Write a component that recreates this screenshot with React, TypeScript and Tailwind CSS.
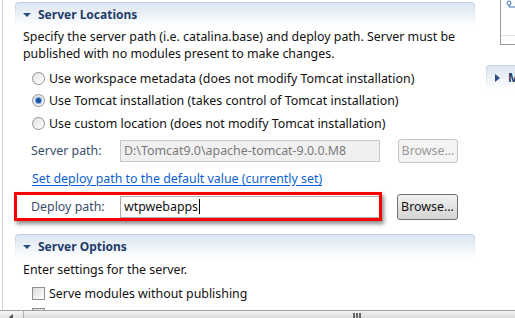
import React from "react";

const font = { fontFamily: '"Noto Sans", "Open Sans", sans-serif' };

function SectionHeader({ title }: { title: string }) {
  return (
    <div className="rounded-t-[4px] bg-gradient-to-b from-[#bfcde0] via-[#e4ebf4] to-white px-[1px] pt-[1px]">
      <div className="flex h-[24px] items-center rounded-t-[3px] bg-gradient-to-b from-[#dce5f1] to-white pl-[7px]">
        <svg width="8" height="8" viewBox="0 0 8 8" className="mr-[7px]">
          <path d="M0 2 L8 2 L4 6 Z" fill="#2b4f82" />
        </svg>
        <span className="whitespace-nowrap text-[12px] font-bold leading-[16px] text-[#1f3d6a]">{title}</span>
      </div>
    </div>
  );
}

function Radio({ checked, label }: { checked?: boolean; label: string }) {
  return (
    <div className="flex h-[22.5px] items-center">
      <span className="relative mr-[4px] flex h-[13px] w-[13px] shrink-0 items-center justify-center rounded-full border border-[#8f8f8f] bg-gradient-to-br from-[#e2e2e2] to-white">
        {checked && <span className="h-[5px] w-[5px] rounded-full bg-[#1d4f9e] shadow-[0_0_1px_1px_#6fa0e0]" />}
      </span>
      <span className="whitespace-nowrap text-[12.4px] leading-[17px] text-[#111]">{label}</span>
    </div>
  );
}

export default function App() {
  return (
    <div className="relative h-[318px] w-[515px] overflow-hidden bg-white" style={font}>
      {/* left edge line */}
      <div className="absolute left-[2px] top-0 h-full w-[1px] bg-[#d4d4d4]" />

      {/* right top panel */}
      <div className="absolute left-[500px] top-0 h-[45px] w-[30px] border-b border-l border-[#9a9a9a] bg-white">
        <svg width="10" height="8" viewBox="0 0 10 8" className="absolute left-[5px] top-[0px]">
          <circle cx="3" cy="3" r="2" fill="none" stroke="#3b6fb0" strokeWidth="1" />
          <path d="M3 5 L3 7 L10 7" stroke="#3b6fb0" strokeWidth="1" fill="none" />
        </svg>
        <div className="absolute left-0 top-[35px] h-[1px] w-full bg-[#e4e4e4]" />
      </div>
      {/* right collapsed section */}
      <div className="absolute left-[486px] top-[65px] w-[40px] rounded-tl-[4px] bg-gradient-to-b from-[#c3d0e1] to-white pl-[1px] pt-[1px]">
        <div className="flex h-[24px] items-center rounded-tl-[3px] bg-gradient-to-b from-[#dce5f1] to-white pl-[8px]">
          <svg width="6" height="8" viewBox="0 0 6 8" className="mr-[7px]">
            <path d="M0 0 L5 4 L0 8 Z" fill="#2b4f82" />
          </svg>
          <span className="text-[12px] font-bold leading-[16px] text-[#1f3d6a]">M</span>
        </div>
      </div>

      <div className="ml-[15px] w-[460px] pt-[2px]">
        <SectionHeader title="Server Locations" />
        <div className="pl-[8px] pt-[1px]">
          <p className="whitespace-nowrap text-[12.4px] leading-[17px] text-[#111]">
            Specify the server path (i.e. catalina.base) and deploy path. Server must be
            <br />
            published with no modules present to make changes.
          </p>
          <div className="mt-[5px] pl-[9px]">
            <Radio label="Use workspace metadata (does not modify Tomcat installation)" />
            <Radio checked label="Use Tomcat installation (takes control of Tomcat installation)" />
            <Radio label="Use custom location (does not modify Tomcat installation)" />
          </div>
          <div className="mt-[4px] flex h-[24px] items-center pl-[8px]">
            <span className="w-[89px] whitespace-nowrap text-[12.4px] leading-[17px] text-[#3a4d6b]">Server path:</span>
            <div className="flex h-[22px] w-[260px] items-center whitespace-nowrap border border-[#c8c8c8] bg-[#f0f0f0] pl-[3px] text-[12.4px] leading-[17px] text-[#7a7a7a]">
              D:\Tomcat9.0\apache-tomcat-9.0.0.M8
            </div>
            <div className="ml-[18px] flex h-[24px] w-[60px] items-center justify-center rounded-[3px] border border-[#c4c4c4] bg-[#f4f4f4] text-[12.4px] leading-[17px] text-[#9a9a9a]">
              Browse...
            </div>
          </div>
          <div className="mt-[6px] pl-[9px] leading-[17px]">
            <span className="whitespace-nowrap text-[12.4px] leading-[17px] text-[#0b5fd0] underline underline-offset-2">
              Set deploy path to the default value (currently set)
            </span>
          </div>
          <div className="mt-[7px] flex h-[26px] items-center pl-[8px]">
            <span className="w-[89px] whitespace-nowrap text-[12.4px] leading-[17px] text-[#3a4d6b]">Deploy path:</span>
            <div className="flex h-[22px] w-[260px] items-center whitespace-nowrap border border-[#abadb3] bg-white pl-[3px] text-[12.4px] leading-[17px] text-[#111]">
              wtpwebapps
              <span className="ml-[1px] inline-block h-[15px] w-[1px] bg-black" />
            </div>
            <div className="ml-[17px] flex h-[26px] w-[61px] items-center justify-center rounded-[3px] border border-[#707070] bg-gradient-to-b from-[#f2f2f2] to-[#d4d4d4] text-[12.4px] leading-[17px] text-[#111]">
              Browse...
            </div>
          </div>
        </div>

        <div className="mt-[14px]">
          <SectionHeader title="Server Options" />
        </div>
        <div className="pl-[8px] pt-[2px]">
          <p className="whitespace-nowrap text-[12.4px] leading-[17px] text-[#111]">Enter settings for the server.</p>
          <div className="mt-[6px] flex h-[20px] items-center pl-[9px]">
            <span className="mr-[4px] h-[13px] w-[13px] shrink-0 border border-[#8f8f8f] bg-gradient-to-br from-[#dcdcdc] to-white" />
            <span className="whitespace-nowrap text-[12.4px] leading-[17px] text-[#111]">Serve modules without publishing</span>
          </div>
          <div className="mt-[4px] flex items-center pl-[9px]">
            <span className="mr-[4px] h-[13px] w-[13px] shrink-0 border border-[#8f8f8f] bg-gradient-to-br from-[#dcdcdc] to-white" />
          </div>
        </div>
      </div>

      {/* red annotation box */}
      <div className="pointer-events-none absolute left-[14px] top-[192px] h-[29px] w-[368px] border-[3px] border-[#ff0000] shadow-[2px_3px_4px_rgba(0,0,0,0.45)]" />

      {/* bottom scrollbar */}
      <div className="absolute bottom-0 left-0 flex h-[8px] w-full border-t border-[#a0a0a0] bg-gradient-to-b from-[#f6f6f6] to-[#e4e4e4]">
        <div className="relative w-[24px] border-r border-[#b0b0b0]">
          <svg width="5" height="6" viewBox="0 0 5 6" className="absolute left-[9px] top-[3px]">
            <path d="M4 0 L0 3 L4 6 Z" fill="#555" />
          </svg>
        </div>
        <div className="relative flex-1 bg-gradient-to-b from-[#f4f4f4] to-[#dcdcdc]">
          <div className="absolute left-[329px] top-[2px] flex gap-[1px]">
            <span className="h-[6px] w-[2px] bg-[#666]" />
            <span className="h-[6px] w-[2px] bg-[#666]" />
            <span className="h-[6px] w-[2px] bg-[#666]" />
          </div>
        </div>
      </div>
    </div>
  );
}
